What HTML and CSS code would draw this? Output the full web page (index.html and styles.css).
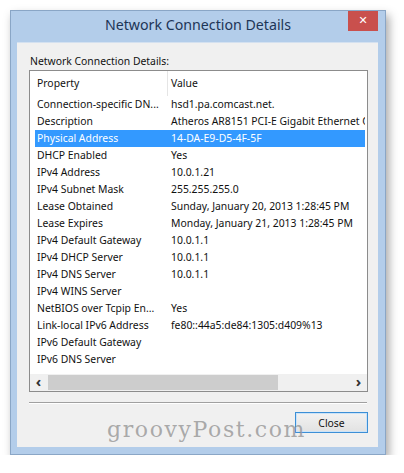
FILE: index.html
```
<!DOCTYPE html>
<html lang="en">
<head>
    <meta charset="UTF-8">
    <meta name="viewport" content="width=device-width, initial-scale=1.0">
    <title>Network Connection Details</title>
    <link rel="stylesheet" href="styles.css">
</head>
<body>

    <div class="window">
        <div class="titlebar">
            <span></span>
            <span class="title">Network Connection Details</span>
            <button class="close-x" type="button">&#x2715;</button>
        </div>

        <div class="client">
            <div class="label">Network Connection Details:</div>

            <div class="listbox">
                <div class="row header">
                    <div class="cell prop">Property</div>
                    <div class="cell">Value</div>
                </div>
                <div class="rows">
                    <div class="row"><div class="cell">Connection-specific DN...</div><div class="cell">hsd1.pa.comcast.net.</div></div>
                    <div class="row"><div class="cell">Description</div><div class="cell">Atheros AR8151 PCI-E Gigabit Ethernet Controller (NDIS 6.30)</div></div>
                    <div class="row selected"><div class="cell">Physical Address</div><div class="cell">14-DA-E9-D5-4F-5F</div></div>
                    <div class="row"><div class="cell">DHCP Enabled</div><div class="cell">Yes</div></div>
                    <div class="row"><div class="cell">IPv4 Address</div><div class="cell">10.0.1.21</div></div>
                    <div class="row"><div class="cell">IPv4 Subnet Mask</div><div class="cell">255.255.255.0</div></div>
                    <div class="row"><div class="cell">Lease Obtained</div><div class="cell">Sunday, January 20, 2013 1:28:45 PM</div></div>
                    <div class="row"><div class="cell">Lease Expires</div><div class="cell">Monday, January 21, 2013 1:28:45 PM</div></div>
                    <div class="row"><div class="cell">IPv4 Default Gateway</div><div class="cell">10.0.1.1</div></div>
                    <div class="row"><div class="cell">IPv4 DHCP Server</div><div class="cell">10.0.1.1</div></div>
                    <div class="row"><div class="cell">IPv4 DNS Server</div><div class="cell">10.0.1.1</div></div>
                    <div class="row"><div class="cell">IPv4 WINS Server</div><div class="cell"></div></div>
                    <div class="row"><div class="cell">NetBIOS over Tcpip En...</div><div class="cell">Yes</div></div>
                    <div class="row"><div class="cell">Link-local IPv6 Address</div><div class="cell">fe80::44a5:de84:1305:d409%13</div></div>
                    <div class="row"><div class="cell">IPv6 Default Gateway</div><div class="cell"></div></div>
                    <div class="row"><div class="cell">IPv6 DNS Server</div><div class="cell"></div></div>
                </div>
                <div class="hscroll">
                    <span class="arrow">&lsaquo;</span>
                    <div class="track"><div class="thumb"></div></div>
                    <span class="arrow">&rsaquo;</span>
                </div>
            </div>

            <div class="separator"></div>

            <div class="actions">
                <button class="btn" type="button">Close</button>
            </div>
        </div>

        <div class="watermark">groovyPost.com</div>
    </div>

</body>
</html>
```

FILE: styles.css
```
body { margin: 0; background: #fff; font-family: "Noto Sans", "Liberation Sans", sans-serif; font-size: 10.4px; color: #111; }

.window {
    position: relative;
    width: 374px;
    margin: 10px 0 0 10px;
    border: 1px solid #8aa6c6;
    background: #b3cdea;
    box-shadow: 3px 5px 9px rgba(0, 0, 0, 0.35);
}

.titlebar { display: grid; grid-template-columns: 1fr auto 1fr; align-items: start; height: 31px; }
.title { font-size: 14.2px; color: #1d3557; line-height: 28px; }
.close-x {
    justify-self: end;
    width: 30px; height: 20px;
    margin: 0 7px 0 0; padding: 0;
    border: none;
    background: #c9504d;
    color: #fff;
    font-size: 11px;
    line-height: 20px;
    font-family: "DejaVu Sans", sans-serif;
}

.client {
    margin: 0 7px 7px 6px;
    height: 405px;
    background: #f0f0f0;
    border-top: 1px solid #d4e1f0;
    box-sizing: border-box;
}

.label { padding: 10px 0 0 13px; line-height: 16px; }

.listbox {
    width: 339px; height: 322px;
    margin: 1px 0 0 12px;
    box-sizing: border-box;
    border: 1px solid #8c8c8c;
    background: #fff;
    display: flex; flex-direction: column;
}

.row { display: grid; grid-template-columns: 134px 1fr; height: 17px; line-height: 17px; margin: 0 2px 0 5px; }
.cell { padding-left: 2px; white-space: nowrap; overflow: hidden; }
.row.header { height: 25px; line-height: 24px; }
.row.header .prop { border-right: 1px solid #e5e5e5; margin-right: 1px; }
.row.selected { background: #3399ff; color: #fff; }
.rows { flex: 1; }

.hscroll { display: flex; height: 17px; background: #f0f0f0; }
.arrow { width: 17px; text-align: center; font-size: 15px; line-height: 14px; font-weight: bold; color: #333; }
.track { flex: 1; display: flex; padding: 1px 0; }
.thumb { width: 230px; margin-left: 1px; background: #cdcdcd; }

.separator { margin: 10px 11px 0 12px; border-top: 1px solid #a0a0a0; border-bottom: 1px solid #fff; }

.actions { display: flex; justify-content: flex-end; padding: 8px 10px 0 0; }
.btn {
    width: 73px; height: 21px;
    border: 1px solid #3c8fd6;
    background: linear-gradient(#f2f2f2, #e2e2e2);
    font: inherit;
    color: #111;
    box-shadow: inset 0 0 0 1px #cbe3f8;
}

.watermark {
    position: absolute;
    left: 96px; top: 406px;
    font-family: "DejaVu Serif", serif;
    font-size: 22px;
    letter-spacing: 1.6px;
    color: rgba(150, 150, 150, 0.8);
}
```
